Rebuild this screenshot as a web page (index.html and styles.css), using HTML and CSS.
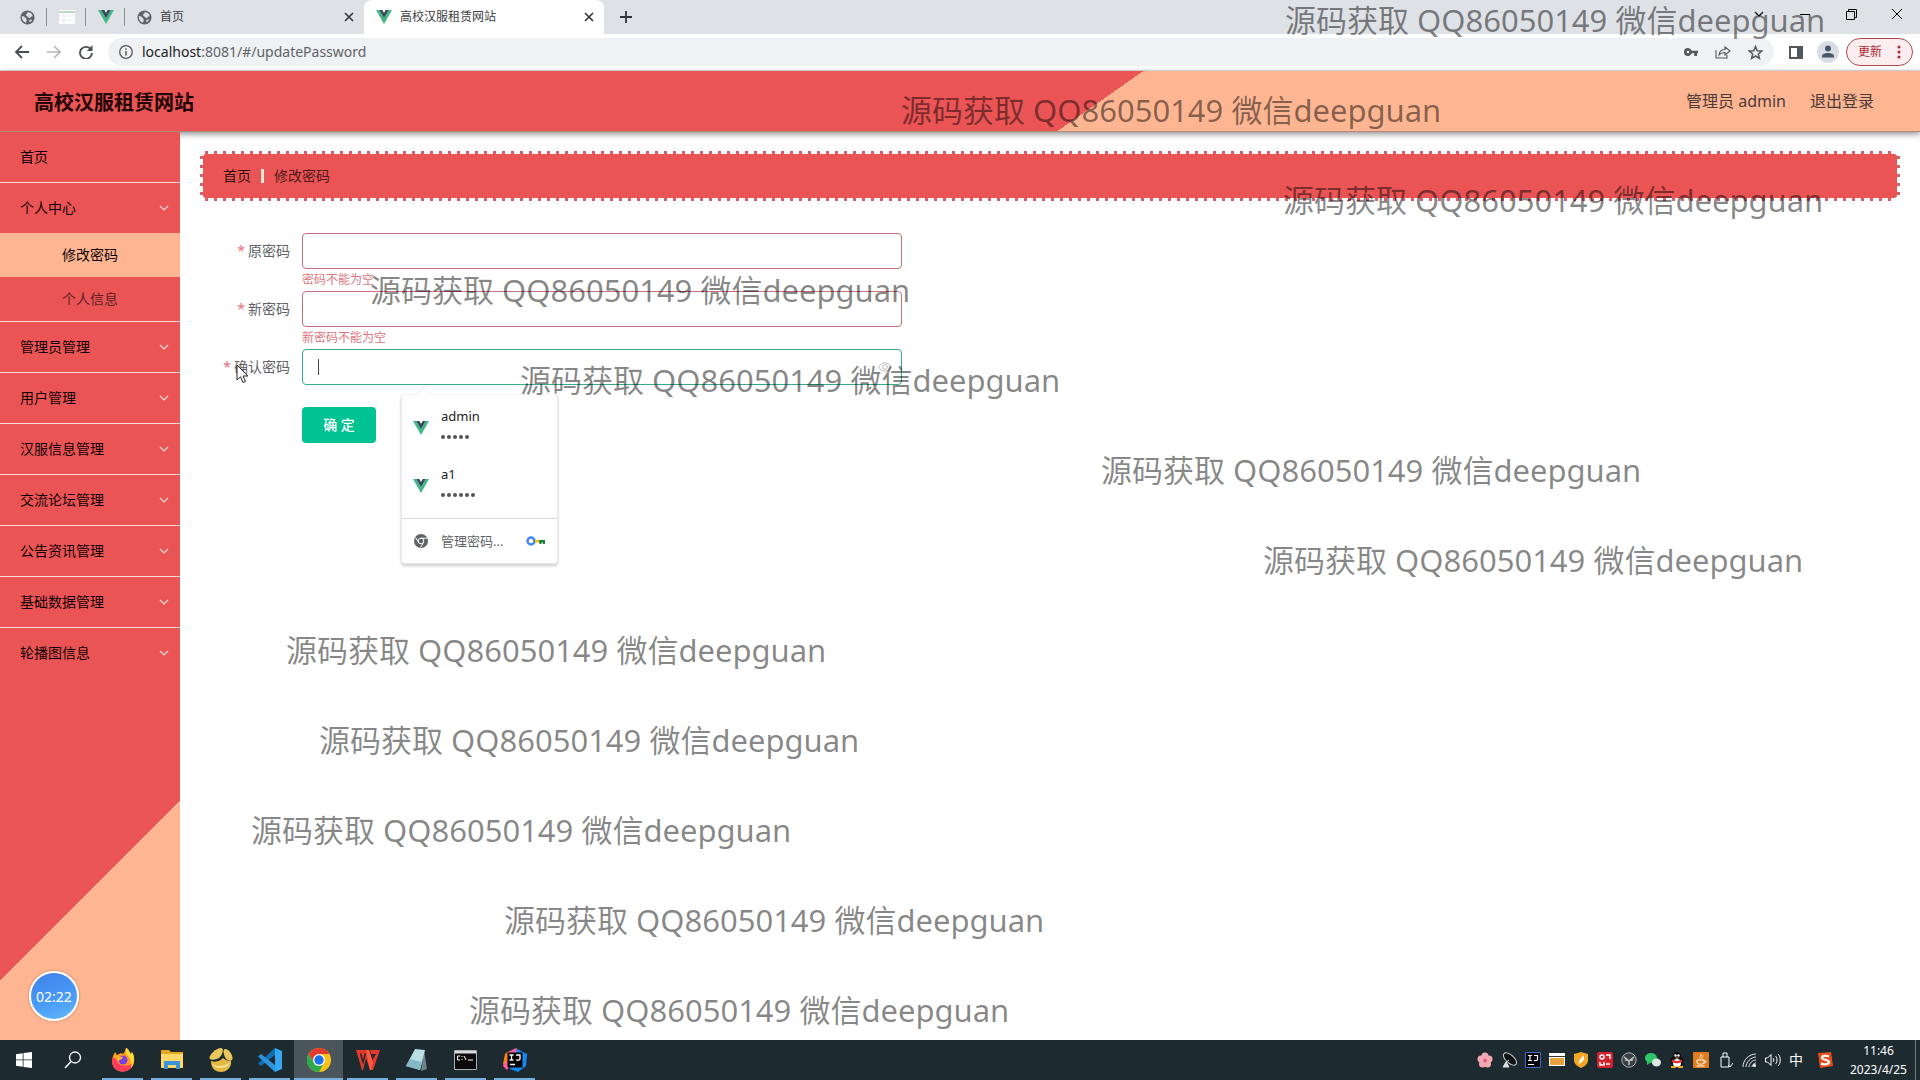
FILE: index.html
```html
<!DOCTYPE html>
<html lang="zh-CN">
<head>
<meta charset="utf-8">
<title>高校汉服租赁网站</title>
<link rel="stylesheet" href="styles.css">
</head>
<body>
<svg class="defs" aria-hidden="true">
  <symbol id="vue" viewBox="0 0 16 14"><path fill="#41b883" d="M0 0h3.300L8 8.200 12.700 0H16L8 14z"/><path fill="#35495e" d="M3.300 0h3L8 3l1.700-3h3L8 8.200z"/></symbol>
  <symbol id="globe" viewBox="0 0 16 16"><circle cx="8" cy="8" r="7.500" fill="#5f6368"/><path fill="#dee1e6" d="M2 6.500c2 .3 3 .8 4 2s1.500 1.500 1 3l-.7 2C3.500 13 1.800 10 2 6.500zM8 2.500c3-.3 5 1.500 5.600 4-1 .8-2 .3-2.500 1.500s-2 .5-2.600-.5S6 6.500 6.500 5 8.500 4 8 2.500z"/><path fill="#dee1e6" d="M10 10.500l3-.5c-.6 1.500-1.500 2.500-3 3z"/></symbol>
  <symbol id="close" viewBox="0 0 10 10"><path d="M1 1l8 8M9 1L1 9" stroke="currentColor" stroke-width="1.600" fill="none"/></symbol>
  <symbol id="chev" viewBox="0 0 10 6"><path d="M1 1l4 4 4-4" stroke="currentColor" stroke-width="1.200" fill="none"/></symbol>
</svg>

<header class="tabstrip">
  <div class="pinned"><svg width="15" height="15"><use href="#globe"/></svg></div>
  <div class="pinned"><svg width="16" height="14" viewBox="0 0 16 14"><path fill="#fff" d="M0 0h16v14H0z"/><path d="M0 2h16" stroke="#b9dcc0" stroke-width="2"/><path d="M0 6h16M0 10h16M5 2v12" stroke="#e6ebe6"/></svg></div>
  <div class="pinned"><svg width="16" height="14"><use href="#vue"/></svg></div>
  <div class="tab"><svg width="15" height="15"><use href="#globe"/></svg><span class="tab-title">首页</span><button class="icon-btn" aria-label="关闭"><svg width="10" height="10"><use href="#close"/></svg></button></div>
  <div class="tab tab-active"><svg width="16" height="14"><use href="#vue"/></svg><span class="tab-title">高校汉服租赁网站</span><button class="icon-btn" aria-label="关闭"><svg width="10" height="10"><use href="#close"/></svg></button></div>
  <button class="icon-btn new-tab" aria-label="新标签页"><svg width="12" height="12" viewBox="0 0 12 12"><path d="M6 0v12M0 6h12" stroke="currentColor" stroke-width="1.800"/></svg></button>
  <div class="window-controls">
    <button class="icon-btn" aria-label="标签搜索"><svg width="10" height="6"><use href="#chev"/></svg></button>
    <button class="icon-btn" aria-label="最小化"><svg width="10" height="10" viewBox="0 0 10 10"><path d="M0 5.500h10" stroke="currentColor"/></svg></button>
    <button class="icon-btn" aria-label="还原"><svg width="11" height="11" viewBox="0 0 11 11"><path d="M.5 2.500h8v8h-8zM2.500 2.500v-2h8v8h-2" stroke="currentColor" fill="none"/></svg></button>
    <button class="icon-btn" aria-label="关闭窗口"><svg width="12" height="12" viewBox="0 0 12 12"><path d="M1 1l10 10M11 1L1 11" stroke="currentColor"/></svg></button>
  </div>
</header>

<div class="toolbar">
  <button class="icon-btn nav-btn" aria-label="后退"><svg width="14" height="14" viewBox="0 0 14 14"><path d="M14 7H1.500M7 1L1 7l6 6" stroke="currentColor" stroke-width="1.800" fill="none"/></svg></button>
  <button class="icon-btn nav-btn nav-off" aria-label="前进"><svg width="14" height="14" viewBox="0 0 14 14"><path d="M0 7h12.500M7 1l6 6-6 6" stroke="currentColor" stroke-width="1.600" fill="none"/></svg></button>
  <button class="icon-btn nav-btn" aria-label="刷新"><svg width="14" height="14" viewBox="0 0 14 14"><path d="M12 4.500A6 6 0 1 0 13 8" stroke="currentColor" stroke-width="1.800" fill="none"/><path d="M13.500 0v6H7.800z" fill="currentColor"/></svg></button>
  <div class="omnibox">
    <svg width="14" height="14" viewBox="0 0 14 14"><circle cx="7" cy="7" r="6.300" stroke="currentColor" stroke-width="1.300" fill="none"/><path d="M7 6v4.500M7 3.300v1.500" stroke="currentColor" stroke-width="1.500"/></svg>
    <span class="url"><b>localhost</b>:8081/#/updatePassword</span>
    <svg width="14" height="8" viewBox="0 0 14 8"><path fill="currentColor" fill-rule="evenodd" d="M4 0a4 4 0 0 1 3.700 2.700H14v2.600h-1V8h-2.700V5.300H7.700A4 4 0 1 1 4 0zm0 2.700a1.300 1.300 0 1 0 0 2.600 1.300 1.300 0 0 0 0-2.600z"/></svg>
    <svg width="16" height="14" viewBox="0 0 16 14"><path d="M1 5v8h11v-3M4 10c.5-4 2.500-5.500 6-5.500V2l5 4-5 4V7.500C7.500 7.500 5.500 8 4 10z" stroke="currentColor" stroke-width="1.100" fill="none"/></svg>
    <svg width="15" height="15" viewBox="0 0 15 15"><path d="M7.500 1.500l1.700 4.200 4.600.3-3.500 3 1.100 4.400-3.900-2.400-3.900 2.400L4.700 9 1.200 6l4.600-.3z" stroke="currentColor" stroke-width="1.500" fill="none"/></svg>
  </div>
  <button class="icon-btn tool-btn" aria-label="侧边栏"><svg width="14" height="13" viewBox="0 0 14 13"><path fill="currentColor" fill-rule="evenodd" d="M0 0h14v13H0zm2 2v9h6V2z"/></svg></button>
  <button class="icon-btn tool-btn" aria-label="用户"><svg width="22" height="22" viewBox="0 0 22 22"><circle cx="11" cy="11" r="11" fill="#d8dde3"/><circle cx="11" cy="7.500" r="3" fill="#47566b"/><path fill="#47566b" d="M5 16.500v-1.500c0-2 3-3 6-3s6 1 6 3v1.500z"/></svg></button>
  <button class="update">更新<svg width="4" height="14" viewBox="0 0 4 14"><circle cx="2" cy="2" r="1.500"/><circle cx="2" cy="7" r="1.500"/><circle cx="2" cy="12" r="1.500"/></svg></button>
</div>

<div class="app">
  <header class="app-header">
    <h1>高校汉服租赁网站</h1>
    <span>管理员 admin</span>
    <a href="#">退出登录</a>
  </header>
  <div class="app-body">
    <nav class="sidebar">
      <ul>
        <li><a class="item" href="#">首页</a></li>
        <li><button class="item">个人中心<svg width="10" height="6"><use href="#chev"/></svg></button>
          <a class="sub sub-active" href="#">修改密码</a>
          <a class="sub" href="#">个人信息</a></li>
        <li><button class="item">管理员管理<svg width="10" height="6"><use href="#chev"/></svg></button></li>
        <li><button class="item">用户管理<svg width="10" height="6"><use href="#chev"/></svg></button></li>
        <li><button class="item">汉服信息管理<svg width="10" height="6"><use href="#chev"/></svg></button></li>
        <li><button class="item">交流论坛管理<svg width="10" height="6"><use href="#chev"/></svg></button></li>
        <li><button class="item">公告资讯管理<svg width="10" height="6"><use href="#chev"/></svg></button></li>
        <li><button class="item">基础数据管理<svg width="10" height="6"><use href="#chev"/></svg></button></li>
        <li><button class="item">轮播图信息<svg width="10" height="6"><use href="#chev"/></svg></button></li>
      </ul>
      <div class="timer">02:22</div>
    </nav>
    <main>
      <div class="crumb-frame">
        <div class="crumbs"><a href="#">首页</a><i></i><span>修改密码</span></div>
      </div>
      <form>
        <div class="field">
          <label for="old">原密码</label>
          <div class="control"><input class="invalid" id="old" type="password"><p>密码不能为空</p></div>
        </div>
        <div class="field">
          <label for="new">新密码</label>
          <div class="control"><input class="invalid" id="new" type="password"><p>新密码不能为空</p></div>
        </div>
        <div class="field">
          <label for="confirm">确认密码</label>
          <div class="control">
            <input class="active" id="confirm" type="password">
            <span class="caret"></span>
            <svg class="eye" width="14" height="10" viewBox="0 0 14 10"><path d="M.7 5C3.500-.5 10.500-.5 13.300 5 10.500 10.500 3.500 10.500.7 5z" stroke="currentColor" fill="none"/><circle cx="7" cy="5" r="2.300" stroke="currentColor" fill="none"/></svg>
            <div class="popup">
              <div class="cred"><svg width="16" height="14"><use href="#vue"/></svg><div><div>admin</div><div class="dots"><i></i><i></i><i></i><i></i><i></i></div></div></div>
              <div class="cred"><svg width="16" height="14"><use href="#vue"/></svg><div><div>a1</div><div class="dots"><i></i><i></i><i></i><i></i><i></i><i></i></div></div></div>
              <div class="manage"><svg width="14" height="14" viewBox="0 0 14 14"><circle cx="7" cy="7" r="7" fill="#5f6368"/><circle cx="7" cy="7" r="2.800" fill="#5f6368" stroke="#fff"/><path d="M7 4.200h6M4.600 8.500L1.600 3.500M9.400 8.500l-2.800 5" stroke="#fff"/></svg><span>管理密码...</span><svg width="20" height="10" viewBox="0 0 20 10"><circle cx="5" cy="5" r="3.500" fill="none" stroke="#4285f4" stroke-width="2.400"/><path d="M9 4h5v2.500H9z" fill="#fbbc04"/><path d="M13 4h6v4h-2V6.500h-1.500V8h-2z" fill="#188038"/></svg></div>
            </div>
          </div>
        </div>
        <button class="submit" type="button">确 定</button>
      </form>
    </main>
  </div>
</div>

<footer class="taskbar">
  <button class="task sys" aria-label="开始"><svg width="16" height="16" viewBox="0 0 16 16"><path fill="#fff" d="M0 2.200l6.700-1v6.300H0zM7.500 1L16 0v7.500H7.500zM0 8.300h6.700v6.400L0 13.800zM7.500 8.300H16V16l-8.500-1.100z"/></svg></button>
  <button class="task sys" aria-label="搜索"><svg width="18" height="18" viewBox="0 0 18 18"><circle cx="11" cy="6.500" r="5.500" stroke="#fff" stroke-width="1.300" fill="none"/><path d="M7 10.500L1 17" stroke="#fff" stroke-width="1.500"/></svg></button>
  <button class="task" aria-label="Firefox"><svg width="24" height="24" viewBox="0 0 24 24"><path fill="#ff9a1f" d="M4 4l2 3 4-2 1 1c3-1 3-3 4-6 3 1 3 4 5 6l1-2c4 6 3 19-9 19.500C2 23.500-2 14 4 4z"/><path fill="#ff3d5a" d="M1.200 10C-.5 19 6 24 12.500 23.500c6-.5 10-5 10-10-3 4-6 5-10 4C7 17 5 13 6 10z"/><path fill="#ffd83b" d="M15 0c3 1 3 4 5 6l1-2c3 4 3 12-1 16 1-5 0-9-3-12-2-2-3-4-2-8z"/><circle cx="12" cy="12" r="4.500" fill="#7b3fe4"/><path fill="#ffb02a" d="M4 8c4-1 5 1 8 1-1 3-3 2-4 4-2-1-4-2-4-5z"/></svg></button>
  <button class="task" aria-label="文件资源管理器"><svg width="22" height="20" viewBox="0 0 22 20"><path fill="#e5a91f" d="M0 0h8l2 2h12v5H0z"/><path fill="#ffd868" d="M0 4h22v14H0z"/><path fill="#3d93d8" d="M3 19v-8h16v8h-4v-4H7v4z"/></svg></button>
  <button class="task" aria-label="Navicat"><svg width="24" height="24" viewBox="0 0 24 24"><path fill="#eac75c" d="M12 0c3 0 2 6-1 9S1 13 .5 10 7 0 12 0z"/><path fill="#eac75c" d="M16 1c4 0 8 6 7.500 10-1 3-5 2-7-1s-3-9-.5-9z"/><path fill="#e2b945" d="M2 13c6 2 10-1 12-3 2 2 5 3 8 3 1 6-4 11-10 11S2 20 2 13z"/><path fill="#f7df90" d="M3 16c4 3 13 3 18-2-1 4-5 6-9 6s-8-1-9-4z"/></svg></button>
  <button class="task" aria-label="Visual Studio Code"><svg width="24" height="24" viewBox="0 0 24 24"><path fill="#1070b3" d="M17 0v7L3 18l-3-2.500z"/><path fill="#2a94dc" d="M17 24v-7L3 6 0 8.500z"/><path fill="#35a6ee" d="M17 0l7 3v18l-7 3z"/></svg></button>
  <button class="task task-active" aria-label="Chrome"><svg width="24" height="24" viewBox="0 0 24 24"><circle cx="12" cy="12" r="12" fill="#fbc116"/><path fill="#e33b2e" d="M1.600 6A12 12 0 0 1 22.400 6H12l-5 9z"/><path fill="#2da94f" d="M1.600 6A12 12 0 0 0 12 24l5-9H7z"/><circle cx="12" cy="12" r="6" fill="#fff"/><circle cx="12" cy="12" r="4.700" fill="#1a73e8"/></svg></button>
  <button class="task" aria-label="WPS"><svg width="24" height="20" viewBox="0 0 24 20"><path fill="#e33a2c" d="M0 0h13l3.500 10L20 4h-5l-1-4h10l-7 20h-3L10 8l-3 12H6z"/><path d="M4.500 3.500L7 12l2.500-8.500" stroke="#1d2b30" stroke-width="1.500" fill="none"/><path fill="#ff5a45" d="M10 0h3l4 13-2 7h-1z"/></svg></button>
  <button class="task" aria-label="记事本"><svg width="22" height="24" viewBox="0 0 22 24"><path fill="#6f8288" d="M18 2l3 19-6 2z"/><path fill="#b9dfe4" d="M9 1l10 1-5 20L0 18z"/><path fill="#84b9c3" d="M4 11l12 3-2 8-14-4z"/></svg></button>
  <button class="task" aria-label="命令提示符"><svg width="23" height="20" viewBox="0 0 23 20"><path fill="#0a0a0a" stroke="#a9b0b3" d="M.5.5h22v19H.5z"/><path fill="#d8dadb" d="M1 1h21v2.500H1z"/><path d="M6 6H3.500v4H6M8 6v1M8 9v1M10 6l2 4M14 10h5" stroke="#fff" fill="none"/></svg></button>
  <button class="task" aria-label="IntelliJ IDEA"><svg width="24" height="24" viewBox="0 0 24 24"><path fill="#fe5aa0" d="M3 5l10-5 4 5-13 17-4-4z"/><path fill="#fc801d" d="M2 6l5-3v9l-7 4z"/><path fill="#1688f5" d="M14 1l10 5-1 12-8 6-8-3z"/><path fill="#000" d="M4.500 4.500h15v15h-15z"/><path d="M6.500 7h4M8.500 7v5M6.500 12h4M13 7h4v4c0 1-2 1.500-4 .8M7 16.500h5" stroke="#fff" stroke-width="1.300" fill="none"/></svg></button>
  <div class="tray">
    <svg viewBox="0 0 16 16"><g fill="#f3a9b5"><circle cx="8" cy="4" r="3.500"/><circle cx="12" cy="7" r="3.500"/><circle cx="10.500" cy="12" r="3.500"/><circle cx="5.500" cy="12" r="3.500"/><circle cx="4" cy="7" r="3.500"/></g><circle cx="8" cy="8.500" r="2" fill="#d9687c"/></svg>
    <svg viewBox="0 0 16 16"><ellipse cx="9" cy="7" rx="8" ry="4" transform="rotate(42 9 7)" fill="#0d1112" stroke="#cfd3d4"/><path d="M8 8l-4 3M2 15l3-5 3 5z" stroke="#ddd" fill="#ddd"/></svg>
    <svg viewBox="0 0 16 16"><path fill="#05060c" stroke="#3e68c9" d="M.5.500h15v15H.5z"/><path d="M3 3.500h4M5 3.500v5M3 8.500h4M9 3.500h3.500v4c0 1-2 1.500-3.500.8M3 12.500h6" stroke="#fff" stroke-width="1.200" fill="none"/></svg>
    <svg viewBox="0 0 16 16"><path fill="#fff" d="M0 1h16v13H0z"/><path fill="#e9a13b" d="M1 6h14v7H1z"/><path d="M0 4.500h16" stroke="#333"/></svg>
    <svg viewBox="0 0 16 16"><path fill="#f5a623" d="M8 0l7 2v6c0 4-3 6-7 8-4-2-7-4-7-8V2z"/><path fill="#fff" d="M10 3c0 3-5 4-4 9 1-1 2-1 3-2 2-2 3-4 1-7z"/></svg>
    <svg viewBox="0 0 16 16"><rect width="16" height="16" rx="2" fill="#d2222d"/><circle cx="5" cy="5" r="2" stroke="#fff" stroke-width="1.500" fill="none"/><path d="M3 10v3h4v-3M9 3h4v4M9 12h4" stroke="#fff" stroke-width="1.500" fill="none"/></svg>
    <svg viewBox="0 0 16 16"><circle cx="8" cy="8" r="7.200" fill="#3a4145" stroke="#aeb4b7"/><path d="M3 5l5 4 5-4M8 9v4M5 9v-2M11 9v-2" stroke="#c9cdcf" stroke-width="1.400" fill="none"/></svg>
    <svg viewBox="0 0 16 16"><ellipse cx="6" cy="6" rx="6" ry="5" fill="#2dc869"/><path fill="#2dc869" d="M2 9l0 4 3-2z"/><ellipse cx="11.500" cy="10.500" rx="4.500" ry="4" fill="#dfe9e3"/></svg>
    <svg viewBox="0 0 16 16"><ellipse cx="8" cy="9" rx="6.500" ry="5.500" fill="#0c0c0c"/><circle cx="8" cy="4.500" r="4.200" fill="#0c0c0c"/><ellipse cx="8" cy="11" rx="4" ry="4" fill="#fff"/><path d="M3 8.500c3 2 7 2 10 0" stroke="#e5322d" stroke-width="2.200" fill="none"/><circle cx="6.500" cy="3.500" r="1.200" fill="#fff"/><circle cx="9.500" cy="3.500" r="1.200" fill="#fff"/><path fill="#f8a51b" d="M6 5.500h4l-2 1.500zM2 14h5v2H2zM9 14h5v2H9z"/></svg>
    <svg viewBox="0 0 16 16"><rect width="16" height="16" rx="1" fill="#e07b1b"/><path d="M4 8h7v3c0 1.500-7 1.500-7 0zM11 8.500c3 0 2 2.500 0 2.500M3.500 14h8M7 6.500c-2-2 2-2 1-4.500M9 6.500c-1-1.500 1-1.500 1-3" stroke="#fff" fill="none"/></svg>
    <svg viewBox="0 0 16 16"><path d="M4 5h8v10H4zM6 5V1h4v4M11 13l2 2 3-4" stroke="#fff" fill="none"/></svg>
    <svg viewBox="0 0 16 16"><path d="M2 15C2 8 8 2 15 2M5 15c0-5 5-10 10-10M8 15c0-3.500 3.500-7 7-7M11 15c0-2 2-4 4-4" stroke="#e6e9ea" fill="none"/><circle cx="13.500" cy="13.500" r="1.500" fill="#fff"/></svg>
    <svg viewBox="0 0 16 16"><path d="M.5 6h2L6 2.500v11L2.500 10h-2zM8 6c1 1 1 3 0 4M10.500 4c2 2 2 6 0 8M13 2c3 3 3 9 0 12" stroke="#fff" fill="none"/></svg>
    <span>中</span>
    <svg viewBox="0 0 16 16"><path fill="#e84e1b" d="M1 1l13-1 2 14-13 2z"/><path d="M12 4.500C8 3 4.500 4 5 6s7 1.500 7 4-5 3-8 1.500" stroke="#fff" stroke-width="2.200" fill="none"/></svg>
  </div>
  <div class="clock"><span>11:46</span><span>2023/4/25</span></div>
</footer>

<div class="marks" aria-hidden="true">
  <span class="m1">源码获取 QQ86050149 微信deepguan</span>
  <span class="m2">源码获取 QQ86050149 微信deepguan</span>
  <span class="m3">源码获取 QQ86050149 微信deepguan</span>
  <span class="m4">源码获取 QQ86050149 微信deepguan</span>
  <span class="m5">源码获取 QQ86050149 微信deepguan</span>
  <span class="m6">源码获取 QQ86050149 微信deepguan</span>
  <span class="m7">源码获取 QQ86050149 微信deepguan</span>
  <span class="m8">源码获取 QQ86050149 微信deepguan</span>
  <span class="m9">源码获取 QQ86050149 微信deepguan</span>
  <span class="m10">源码获取 QQ86050149 微信deepguan</span>
  <span class="m11">源码获取 QQ86050149 微信deepguan</span>
  <span class="m12">源码获取 QQ86050149 微信deepguan</span>
</div>
<svg class="pointer" width="13" height="20" viewBox="0 0 13 20"><path d="M1 1v15l3.500-3.200L7 18.500l2.500-1L7 12h5z" fill="#fff" stroke="#222"/></svg>
</body>
</html>
```
FILE: styles.css
```css
* { box-sizing: border-box; }
html, body { height: 100%; }
body {
  margin: 0;
  display: flex;
  flex-direction: column;
  overflow: hidden;
  position: relative;
  background: #fff;
  font: 14px/20px "Noto Sans", "Noto Sans CJK SC", sans-serif;
  color: #303133;
}
button { border: 0; padding: 0; background: none; font: inherit; color: inherit; }
a { color: inherit; text-decoration: none; }
ul, p, h1 { margin: 0; padding: 0; list-style: none; }
svg { display: block; flex: none; }
.defs { position: absolute; width: 0; height: 0; }
.icon-btn { display: flex; align-items: center; justify-content: center; flex: none; color: #303438; }

/* Browser tabs */
.tabstrip { display: flex; height: 34px; flex: none; background: #dee1e6; padding-left: 8px; font-size: 12px; }
.pinned { display: flex; align-items: center; justify-content: center; width: 39px; position: relative; }
.pinned::after { content: ""; position: absolute; right: 0; top: 8px; width: 1px; height: 18px; background: #8b8f94; }
.tab { display: flex; align-items: center; gap: 8px; width: 239px; padding: 0 10px 0 12px; }
.tab-title { flex: 1; color: #3c4043; }
.tab-active { width: 240px; background: #fff; border-radius: 8px 8px 0 0; }
.new-tab { width: 44px; }
.window-controls { display: flex; margin-left: auto; height: 28px; color: #000; }
.window-controls .icon-btn { width: 46px; color: #000; }

/* Address bar */
.toolbar { display: flex; align-items: center; height: 37px; flex: none; padding: 0 7px 0 6px; background: #fff; border-bottom: 1px solid #e3e3e6; }
.nav-btn { width: 32px; height: 28px; color: #4a4d51; }
.nav-off { color: #b4b7ba; }
.omnibox { display: flex; align-items: center; flex: 1; gap: 17px; height: 28px; margin: 0 6px; padding: 0 11px; border-radius: 14px; background: #eff1f3; color: #54585d; }
.url { flex: 1; margin-left: -8px; font-size: 14px; color: #5f6368; }
.url b { font-weight: 400; color: #202124; }
.tool-btn { width: 32px; height: 28px; color: #54585d; }
.update { display: flex; align-items: center; justify-content: space-between; width: 67px; height: 28px; margin-left: 2px; padding: 0 11px; border: 1px solid #b3474d; border-radius: 14px; background: #fceef0; color: #b3262e; font-size: 12px; fill: #b3262e; }

/* Application frame */
.app { flex: 1; display: flex; flex-direction: column; min-height: 0; }
.app-header {
  display: flex;
  align-items: center;
  gap: 24px;
  height: 61px;
  flex: none;
  padding: 0 46px 0 34px;
  font-size: 16px;
  color: #4a3a38;
  background: linear-gradient(145deg, #ea5455 57%, #feb692 57%);
  border-bottom: 1px solid #b48a80;
  box-shadow: 0 2px 6px rgba(0, 0, 0, .45);
  position: relative;
}
.app-header h1 { flex: 1; padding-top: 3px; font-size: 20px; line-height: 28px; color: #240506; }
.app-body { flex: 1; display: flex; min-height: 0; }
.sidebar { width: 180px; flex: none; position: relative; background: linear-gradient(135deg, #ea5455 600px, #feb692 600px); color: #120404; }
.sidebar li + li { border-top: 1px solid #f8dcd8; }
.item { display: flex; align-items: center; justify-content: space-between; width: 100%; height: 50px; padding: 0 11px 0 20px; }
.item svg { color: #fbdcd8; }
.sub { display: block; height: 44px; line-height: 44px; padding-left: 62px; color: #5c2226; }
.sub-active { background: #feb692; color: #120404; }
.timer {
  position: absolute;
  left: 29px;
  bottom: 19px;
  width: 50px;
  height: 50px;
  border: 2px solid #fff;
  border-radius: 50%;
  background: linear-gradient(160deg, #3f80ea, #4a9cf8 60%, #63bbfb);
  box-shadow: 0 0 3px rgba(0, 0, 0, .3);
  color: #fff;
  line-height: 48px;
  text-align: center;
}

/* Page content */
main { flex: 1; padding: 19px 20px; }
.crumb-frame {
  padding: 3px;
  --dash: #d4606a 0 3px, transparent 3px 9px;
  background:
    repeating-linear-gradient(90deg, var(--dash)) 5px 0 / calc(100% - 8px) 3px no-repeat,
    repeating-linear-gradient(90deg, var(--dash)) 5px 100% / calc(100% - 8px) 3px no-repeat,
    repeating-linear-gradient(180deg, var(--dash)) 0 5px / 3px calc(100% - 8px) no-repeat,
    repeating-linear-gradient(180deg, var(--dash)) 100% 5px / 3px calc(100% - 8px) no-repeat;
}
.crumbs { display: flex; align-items: center; height: 44px; padding: 0 20px; border-radius: 3px; background: #ea5455; color: #50191b; }
.crumbs a { color: #32100f; }
.crumbs i { width: 3px; height: 14px; margin: 0 10px; background: #fdebd0; }
form { padding: 32px 0 0 2px; }
.field { display: flex; width: 700px; margin-bottom: 22px; }
.field label { width: 100px; padding-right: 12px; line-height: 36px; text-align: right; color: #606266; }
.field label::before { content: "*"; margin-right: 3px; color: #e87078; }
.control { flex: 1; position: relative; }
.control input { display: block; width: 100%; height: 36px; padding: 0 15px; border: 1px solid #c8707a; border-radius: 4px; outline: 0; background: #fff; font: inherit; }
.control .active { border-color: #36a892; }
.control p { position: absolute; top: 37px; left: 0; font-size: 12px; line-height: 20px; color: #e0747c; }
.caret { position: absolute; left: 16px; top: 10px; width: 1px; height: 16px; background: #444; }
.eye { position: absolute; right: 10px; top: 13px; color: #bbb; }
.submit { width: 74px; height: 36px; margin-left: 100px; border-radius: 4px; background: #00c292; color: #fff; font-weight: 500; }

/* Saved password suggestions */
.popup { position: absolute; left: 99px; top: 45px; width: 157px; padding-top: 4px; background: #fff; border: 1px solid #e8e8e8; border-top-color: #f4f4f4; border-radius: 4px; box-shadow: 0 2px 3px rgba(0, 0, 0, .2); color: #202124; }
.popup::before { content: ""; position: absolute; left: 16px; top: -6px; width: 10px; height: 10px; background: #fff; border: 1px solid #eee; border-width: 1px 0 0 1px; transform: rotate(45deg); }
.cred { display: flex; align-items: center; gap: 12px; height: 58px; padding-left: 11px; font-size: 13px; line-height: 18px; }
.dots { display: flex; gap: 2px; height: 24px; align-items: center; }
.dots i { width: 4px; height: 4px; border-radius: 50%; background: #555; }
.manage { display: flex; align-items: center; gap: 13px; height: 45px; margin-top: 3px; padding: 0 11px 0 12px; border-top: 1px solid #d9d9d9; font-size: 13px; color: #606266; white-space: nowrap; }
.manage span { flex: 1; }

/* Desktop taskbar */
.taskbar { display: flex; height: 40px; flex: none; background: #1d2b30; color: #fff; position: relative; }
.task { display: flex; align-items: center; justify-content: center; width: 49px; border: solid transparent; border-width: 0 4px; position: relative; }
.task::after { content: ""; position: absolute; left: 0; right: 0; bottom: 0; height: 2px; background: #76b0e0; }
.sys { width: 48px; }
.sys::after { display: none; }
.sys + .sys { width: 50px; }
.task-active { background: #4a565b; border-width: 0; }
.tray { display: flex; align-items: center; gap: 8px; margin-left: auto; font-size: 14px; }
.tray svg { width: 16px; height: 16px; }
.tray span { width: 16px; }
.tray :last-child { margin-left: 4px; }
.clock { display: flex; flex-direction: column; justify-content: center; width: 74px; margin: 0 4px 0 9px; border-right: 1px solid #6d787c; font-size: 12px; line-height: 19px; text-align: center; }

/* Watermark layer */
.marks { position: absolute; inset: 0; pointer-events: none; overflow: hidden; font-size: 31px; line-height: 40px; color: rgba(0, 0, 0, .48); white-space: nowrap; }
.marks span { position: absolute; }
.m1 { left: 1285px; top: 0; }
.m2 { left: 901px; top: 90px; }
.m3 { left: 1283px; top: 180px; }
.m4 { left: 370px; top: 270px; }
.m5 { left: 520px; top: 360px; }
.m6 { left: 1101px; top: 450px; }
.m7 { left: 1263px; top: 540px; }
.m8 { left: 286px; top: 630px; }
.m9 { left: 319px; top: 720px; }
.m10 { left: 251px; top: 810px; }
.m11 { left: 504px; top: 900px; }
.m12 { left: 469px; top: 990px; }
.pointer { position: absolute; left: 236px; top: 364px; }
```
